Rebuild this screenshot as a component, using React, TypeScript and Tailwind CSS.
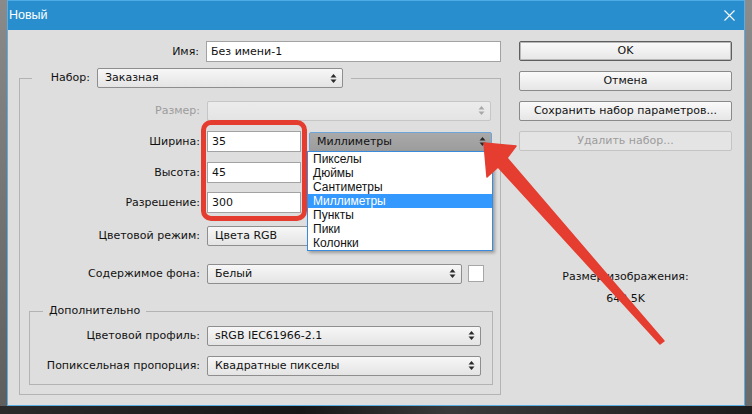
import React from 'react';

function Spinner({ disabled }: { disabled?: boolean }) {
  const fill = disabled ? '#a8a8a8' : '#2a2a2a';
  return (
    <svg width="7" height="11" viewBox="0 0 7 11" className="shrink-0">
      <polygon points="0.5,4.5 3.5,1 6.5,4.5" fill={fill} />
      <polygon points="0.5,6.5 3.5,10 6.5,6.5" fill={fill} />
    </svg>
  );
}

interface SelectProps {
  text?: string;
  width: string;
  disabled?: boolean;
  active?: boolean;
}

function Select({ text, width, disabled, active }: SelectProps) {
  let look = 'border-[#8e8e8e] bg-[linear-gradient(#f7f7f7,#e4e4e4)] text-[#111]';
  if (disabled) look = 'border-[#c6c6c6] bg-[linear-gradient(#ececec,#e4e4e4)] text-[#999]';
  if (active) look = 'border-[#6ea5d8] bg-[linear-gradient(#a9a9a9,#9c9c9c)] text-[#111]';
  return (
    <div className={`${width} h-[20px] shrink-0 flex items-center justify-between rounded-[2px] border pl-[7px] pr-[5px] ${look}`}>
      <span className="leading-[14px] whitespace-nowrap">{text}</span>
      <Spinner disabled={disabled} />
    </div>
  );
}

function Field({ value, width }: { value: string; width: string }) {
  return (
    <div className={`${width} h-[21px] shrink-0 flex items-center border border-[#a2a2a2] bg-white pl-[4px] leading-[14px]`}>
      {value}
    </div>
  );
}

function Row({ label, labelWidth, mt, children, muted }: { label: string; labelWidth: string; mt: string; children: React.ReactNode; muted?: boolean }) {
  return (
    <div className={`flex items-center h-[21px] ${mt}`}>
      <div className={`${labelWidth} shrink-0 text-right leading-[14px] whitespace-nowrap ${muted ? 'text-[#9c9c9c]' : ''}`}>{label}</div>
      <div className="ml-[7px] flex items-center">{children}</div>
    </div>
  );
}

function Button({ label, disabled, primary, mt }: { label: string; disabled?: boolean; primary?: boolean; mt?: string }) {
  let look = 'border-[#8a8a8a] bg-[linear-gradient(#fafafa,#e6e6e6)] text-[#111]';
  if (primary) look = 'border-[#5e5e5e] bg-[linear-gradient(#fafafa,#e6e6e6)] text-[#111] shadow-[inset_0_0_0_1px_#b8b8b8]';
  if (disabled) look = 'border-[#c4c4c4] bg-[#e4e4e4] text-[#9c9c9c]';
  return (
    <div className={`h-[20px] flex items-center justify-center rounded-[2px] border leading-[14px] ${look} ${mt ?? ''}`}>
      {label}
    </div>
  );
}

const units = ['Пикселы', 'Дюймы', 'Сантиметры', 'Миллиметры', 'Пункты', 'Пики', 'Колонки'];

export default function App() {
  return (
    <div className="relative w-[752px] h-[414px] overflow-hidden bg-[#1f1f1f] font-['DejaVu_Sans',sans-serif] text-[11px] text-[#111]">
      <div className="flex h-[406px]">
        <div className="w-[7px] bg-[linear-gradient(#8a8a8a,#5e5e5e)]" />
        <div className="w-[738px] flex flex-col border border-t-0 border-[#5aaee2]">
          {/* title bar */}
          <div className="h-[30px] flex items-center justify-between bg-[#288ecd] border-t border-[#4eaae3] pl-[1px] pr-[9px]">
            <span className="font-['Liberation_Sans',sans-serif] text-[12.5px] text-white">Новый</span>
            <svg width="11" height="11" viewBox="0 0 11 11">
              <path d="M0.5 0.5 L10.5 10.5 M10.5 0.5 L0.5 10.5" stroke="#fff" strokeWidth="1.1" />
            </svg>
          </div>

          {/* body */}
          <div className="flex-1 flex bg-[#dedede] pl-[11px] pt-[11px]">
            <div className="w-[482px] shrink-0">
              <Row label="Имя:" labelWidth="w-[180px]" mt="">
                <Field value="Без имени-1" width="w-[295px]" />
              </Row>

              <fieldset className="mt-[6px] w-[482px] border border-[#b3b3b3]">
                <legend className="ml-[12px] pr-[8px]">
                  <div className="flex items-center">
                    <div className="w-[58px] text-right leading-[14px]">Набор:</div>
                    <div className="ml-[7px]">
                      <Select text="Заказная" width="w-[246px]" />
                    </div>
                  </div>
                </legend>

                <Row label="Размер:" labelWidth="w-[180px]" mt="mt-[12px]" muted>
                  <Select width="w-[284px]" disabled />
                </Row>
                <Row label="Ширина:" labelWidth="w-[180px]" mt="mt-[10px]">
                  <Field value="35" width="w-[94px]" />
                  <div className="ml-[8px]">
                    <Select text="Миллиметры" width="w-[183px]" active />
                  </div>
                </Row>
                <Row label="Высота:" labelWidth="w-[180px]" mt="mt-[10px]">
                  <Field value="45" width="w-[94px]" />
                </Row>
                <Row label="Разрешение:" labelWidth="w-[180px]" mt="mt-[9px]">
                  <Field value="300" width="w-[94px]" />
                </Row>
                <Row label="Цветовой режим:" labelWidth="w-[180px]" mt="mt-[12px]">
                  <Select text="Цвета RGB" width="w-[130px]" />
                </Row>
                <Row label="Содержимое фона:" labelWidth="w-[180px]" mt="mt-[17px]">
                  <Select text="Белый" width="w-[255px]" />
                  <div className="ml-[6px] w-[16px] h-[17px] border border-[#a6a6a6] bg-white" />
                </Row>

                <fieldset className="mt-[20px] ml-[9px] mr-[7px] mb-[9px] pb-[8px] border border-[#b3b3b3]">
                  <legend className="ml-[13px] px-[6px] leading-[14px]">Дополнительно</legend>
                  <Row label="Цветовой профиль:" labelWidth="w-[170px]" mt="mt-[7px]">
                    <Select text="sRGB IEC61966-2.1" width="w-[274px]" />
                  </Row>
                  <Row label="Попиксельная пропорция:" labelWidth="w-[170px]" mt="mt-[9px]">
                    <Select text="Квадратные пикселы" width="w-[274px]" />
                  </Row>
                </fieldset>
              </fieldset>
            </div>

            {/* right column */}
            <div className="ml-[18px] w-[213px] shrink-0">
              <Button label="OK" primary />
              <Button label="Отмена" mt="mt-[10px]" />
              <Button label="Сохранить набор параметров..." mt="mt-[10px]" />
              <Button label="Удалить набор..." disabled mt="mt-[10px]" />
              <div className="mt-[119px] text-center leading-[14px]">Размер изображения:</div>
              <div className="mt-[8px] text-center leading-[14px]">642.5K</div>
            </div>
          </div>
        </div>
        <div className="flex-1 bg-[linear-gradient(#8c8c8c,#6a6a6a)]" />
      </div>
      <div className="h-[8px] bg-[linear-gradient(90deg,#2a2a2a,#161616_40%,#3a3a3a_60%,#1c1c1c)]" />

      {/* unit dropdown list */}
      <div className="absolute left-[307px] top-[151px] w-[186px] border border-[#3a8bdb] bg-white font-['Liberation_Sans',sans-serif] text-[12px] shadow-[2px_2px_3px_rgba(0,0,0,0.3)]">
        {units.map((u) => (
          <div key={u} className={`h-[14px] leading-[14px] pl-[5px] ${u === 'Миллиметры' ? 'bg-[#3399ff] text-white' : ''}`}>
            {u}
          </div>
        ))}
      </div>

      {/* red highlight frame */}
      <div className="absolute left-[201px] top-[120px] w-[106px] h-[101px] border-[5px] border-[#e43d30] rounded-[10px]" />

      {/* red arrow */}
      <svg className="absolute left-0 top-0 pointer-events-none" width="752" height="414" viewBox="0 0 752 414">
        <polygon
          points="484,143 516,146 507,158 664,341 660,344 498,167 487,177"
          fill="#e53d30"
          stroke="#e53d30"
          strokeLinejoin="round"
          strokeWidth="1.5"
        />
      </svg>
    </div>
  );
}
